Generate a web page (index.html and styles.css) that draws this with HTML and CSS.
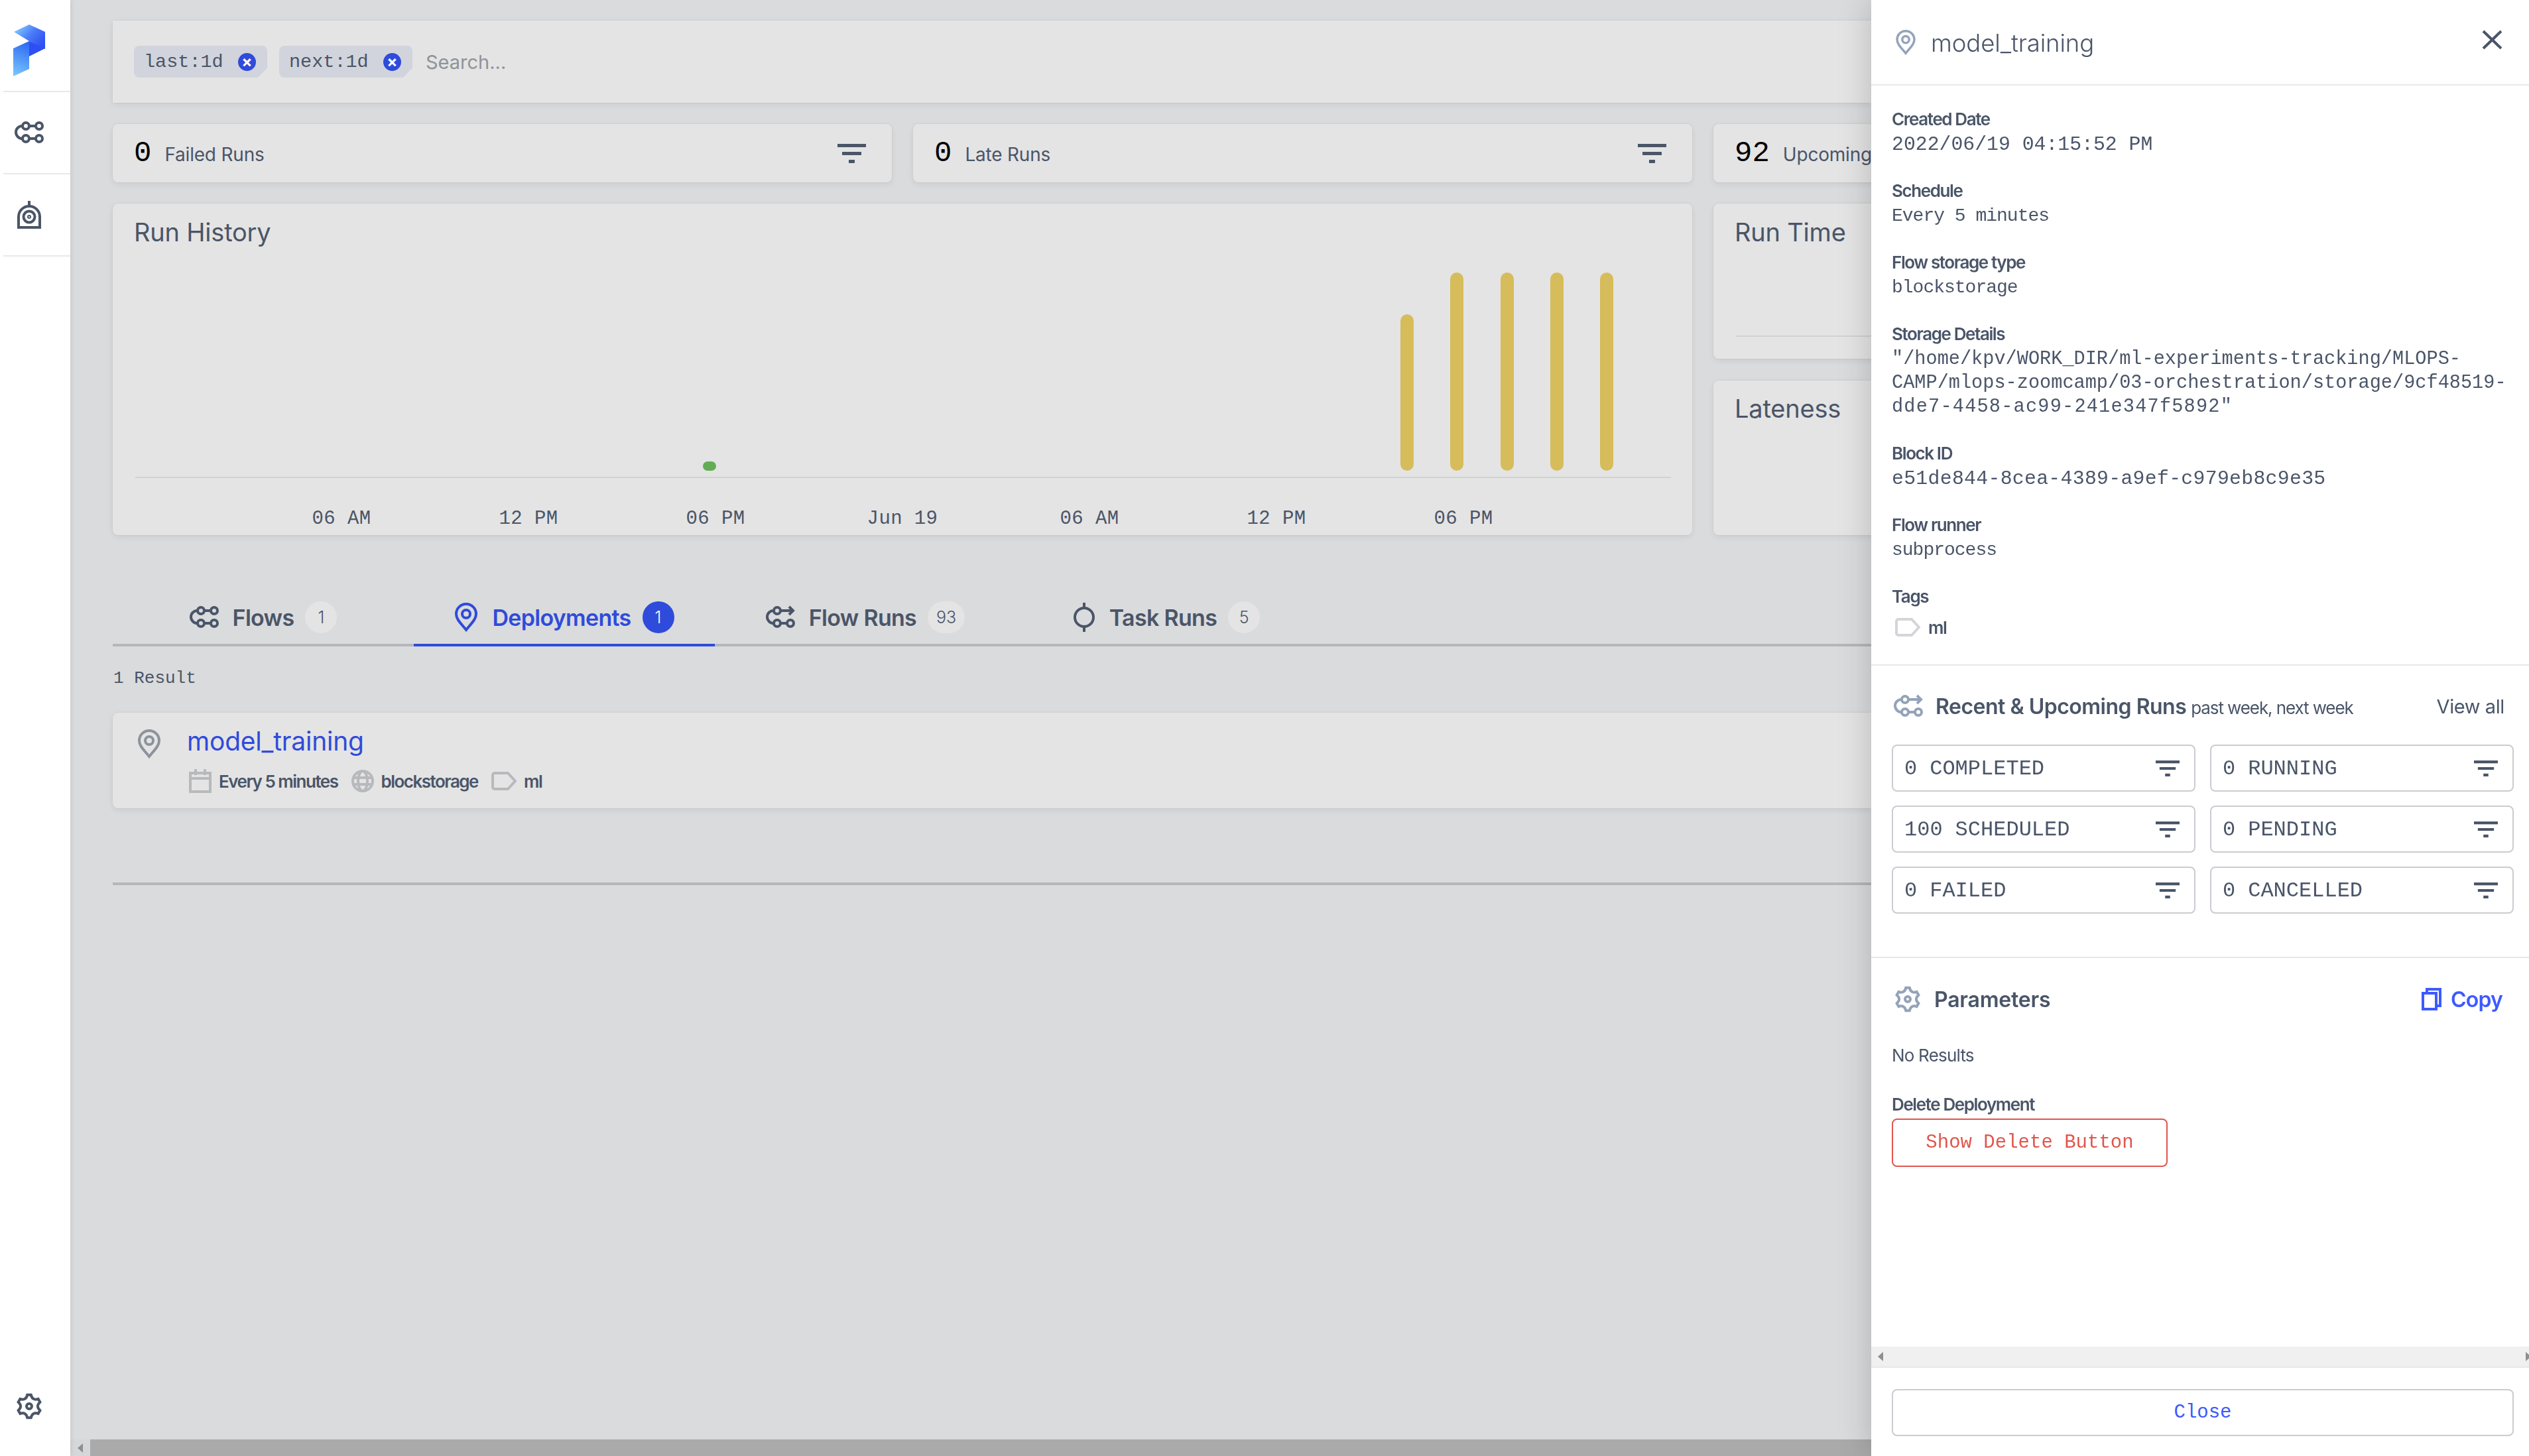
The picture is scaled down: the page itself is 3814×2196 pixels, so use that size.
FILE: index.html
```html
<!DOCTYPE html>
<html lang="en">
<head>
  <meta charset="UTF-8">
  <title>Prefect Orion</title>
  <link rel="stylesheet" href="styles.css">
</head>
<body>
  <svg class="icon-defs" width="0" height="0">
    <defs>
      <symbol id="i-flow" viewBox="0 0 44 36">
        <circle cx="17" cy="8" r="5"/><circle cx="37" cy="8" r="5"/><circle cx="17" cy="27" r="5"/><circle cx="37" cy="27" r="5"/>
        <path d="M22 8H32M22 27H32M12 8H11.500A9.500 9.500 0 0 0 11.500 27H12"/>
      </symbol>
      <symbol id="i-flow-run" viewBox="0 0 44 36">
        <circle cx="17" cy="8" r="5"/><circle cx="17" cy="27" r="5"/><circle cx="37" cy="27" r="5"/>
        <path d="M22 8H40M35 2L41 8L35 14M22 27H32M12 8H11.500A9.500 9.500 0 0 0 11.500 27H12"/>
      </symbol>
      <symbol id="i-task" viewBox="0 0 34 44">
        <circle cx="17" cy="22" r="14"/><path d="M17 0V8M17 36V44"/>
      </symbol>
      <symbol id="i-pin" viewBox="0 0 36 44">
        <path d="M18 41C10 31 3 25 3 17A15 15 0 0 1 33 17C33 25 26 31 18 41Z"/><circle cx="18" cy="17" r="6"/>
      </symbol>
      <symbol id="i-agent" viewBox="0 0 36 42">
        <path d="M18 0V8M2 40V24A16 16 0 0 1 34 24V40Z"/><circle cx="18" cy="24" r="8.500"/><circle cx="18" cy="24" r="1"/>
      </symbol>
      <symbol id="i-gear" viewBox="0 0 40 40">
        <path d="M17.260 2.720L22.740 2.720Q24.750 11.770 33.600 8.990L36.340 13.730Q29.500 20 36.340 26.270L33.600 31.010Q24.750 28.230 22.740 37.280L17.260 37.280Q15.250 28.230 6.400 31.010L3.660 26.270Q10.500 20 3.660 13.730L6.400 8.990Q15.250 11.770 17.260 2.720Z"/>
        <circle cx="20" cy="20" r="4"/>
      </symbol>
      <symbol id="i-tag" viewBox="0 0 38 28">
        <path d="M5 2H25L36 14L25 26H5A3 3 0 0 1 2 23V5A3 3 0 0 1 5 2Z"/>
      </symbol>
      <symbol id="i-calendar" viewBox="0 0 34 36">
        <path d="M2 6H32V34H2ZM2 14H32M10 0V9M24 0V9"/>
      </symbol>
      <symbol id="i-globe" viewBox="0 0 34 34">
        <circle cx="17" cy="17" r="15"/><ellipse cx="17" cy="17" rx="7" ry="15"/><path d="M2 12H32M2 22H32"/>
      </symbol>
      <symbol id="i-filter" viewBox="0 0 43 29" preserveAspectRatio="none">
        <path class="solid" d="M0 0H43V5H0ZM7 12H36V17H7ZM17 24H26V29H17Z"/>
      </symbol>
      <symbol id="i-copy" viewBox="0 0 30 34">
        <path d="M8 6V2H28V27H23M2 8H22V32H2Z"/>
      </symbol>
      <symbol id="i-close" viewBox="0 0 31 30">
        <path d="M2 2L29 28M29 2L2 28"/>
      </symbol>
      <linearGradient id="logo-top" x1="0" y1="0" x2="1" y2="0.700">
        <stop offset="0" stop-color="#8fdcff"/><stop offset="0.550" stop-color="#4a7cf8"/><stop offset="1" stop-color="#2f50f2"/>
      </linearGradient>
      <linearGradient id="logo-low" x1="0.500" y1="0" x2="0.300" y2="1">
        <stop offset="0" stop-color="#2f6cf2"/><stop offset="1" stop-color="#79c4fd"/>
      </linearGradient>
    </defs>
  </svg>

  <div class="app">
    <nav class="sidebar">
      <div class="side-item side-logo">
        <svg class="logo" viewBox="0 0 48 78">
          <polygon fill="url(#logo-top)" points="1,11 24,0 48,11 48,37 24,25"/>
          <polygon fill="#2e4ff5" points="24,25 48,36 24,48"/>
          <polygon fill="url(#logo-low)" points="0,36 24,25 24,67 0,78"/>
        </svg>
      </div>
      <div class="side-item"><svg class="ico ico-flow side-ico"><use href="#i-flow"/></svg></div>
      <div class="side-item"><svg class="ico ico-agent side-ico"><use href="#i-agent"/></svg></div>
      <div class="side-spacer"></div>
      <div class="side-bottom"><svg class="ico ico-gear side-ico"><use href="#i-gear"/></svg></div>
    </nav>

    <div class="main">
      <div class="content">
        <div class="search-card">
          <span class="chip">last:1d <span class="chip-x">×</span></span>
          <span class="chip">next:1d <span class="chip-x">×</span></span>
          <input class="search-input" type="text" placeholder="Search...">
        </div>

        <div class="stats-row">
          <div class="stat-card">
            <span class="stat-num">0</span><span class="stat-label">Failed Runs</span>
            <svg class="filter filter-lg"><use href="#i-filter"/></svg>
          </div>
          <div class="stat-card">
            <span class="stat-num">0</span><span class="stat-label">Late Runs</span>
            <svg class="filter filter-lg"><use href="#i-filter"/></svg>
          </div>
          <div class="stat-card">
            <span class="stat-num">92</span><span class="stat-label">Upcoming Runs</span>
            <svg class="filter filter-lg"><use href="#i-filter"/></svg>
          </div>
        </div>

        <div class="charts-row">
          <div class="chart-card history-card">
            <h2 class="chart-title">Run History</h2>
            <svg class="history-chart" viewBox="0 0 2381 330">
              <rect class="chart-axis" x="34" y="319" width="2316" height="2"/>
              <rect class="chart-dot" x="890" y="296" width="20" height="14" rx="7"/>
              <rect class="chart-bar" x="1942" y="74" width="20" height="236" rx="10"/>
              <rect class="chart-bar" x="2017" y="11" width="20" height="299" rx="10"/>
              <rect class="chart-bar" x="2093" y="11" width="20" height="299" rx="10"/>
              <rect class="chart-bar" x="2168" y="11" width="20" height="299" rx="10"/>
              <rect class="chart-bar" x="2243" y="11" width="20" height="299" rx="10"/>
            </svg>
            <div class="chart-ticks">
              <span>06 AM</span><span>12 PM</span><span>06 PM</span><span>Jun 19</span><span>06 AM</span><span>12 PM</span><span>06 PM</span>
            </div>
          </div>
          <div class="chart-side">
            <div class="chart-card side-card runtime-card">
              <h2 class="chart-title">Run Time</h2>
              <div class="runtime-line"></div>
            </div>
            <div class="chart-card side-card">
              <h2 class="chart-title">Lateness</h2>
            </div>
          </div>
        </div>

        <div class="tabs">
          <div class="tab">
            <svg class="ico ico-flow tab-ico"><use href="#i-flow"/></svg>
            <span class="tab-name">Flows</span><span class="tab-badge">1</span>
          </div>
          <div class="tab tab-active">
            <svg class="ico ico-pin tab-ico"><use href="#i-pin"/></svg>
            <span class="tab-name">Deployments</span><span class="tab-badge">1</span>
          </div>
          <div class="tab">
            <svg class="ico ico-flow tab-ico"><use href="#i-flow-run"/></svg>
            <span class="tab-name">Flow Runs</span><span class="tab-badge">93</span>
          </div>
          <div class="tab">
            <svg class="ico ico-task tab-ico"><use href="#i-task"/></svg>
            <span class="tab-name">Task Runs</span><span class="tab-badge">5</span>
          </div>
        </div>

        <div class="result-count">1 Result</div>

        <div class="deploy-card">
          <svg class="ico ico-pin deploy-pin"><use href="#i-pin"/></svg>
          <div class="deploy-info">
            <a class="deploy-name">model_training</a>
            <div class="deploy-meta">
              <svg class="ico ico-cal meta-ico"><use href="#i-calendar"/></svg><span class="meta-text">Every 5 minutes</span>
              <svg class="ico ico-globe meta-ico"><use href="#i-globe"/></svg><span class="meta-text">blockstorage</span>
              <svg class="ico ico-tag meta-ico"><use href="#i-tag"/></svg><span class="meta-text">ml</span>
            </div>
          </div>
        </div>

        <div class="list-end"></div>
      </div>

      <div class="main-scroll">
        <div class="scroll-btn"><span class="arrow-left"></span></div>
        <div class="scroll-thumb"></div>
      </div>
    </div>
  </div>

  <aside class="panel">
    <header class="panel-head">
      <svg class="ico ico-pin head-pin"><use href="#i-pin"/></svg>
      <span class="panel-title">model_training</span>
      <svg class="ico ico-close"><use href="#i-close"/></svg>
    </header>

    <div class="panel-body">
      <section class="details">
        <div class="field"><div class="field-label">Created Date</div><div class="field-value">2022/06/19 04:15:52 PM</div></div>
        <div class="field"><div class="field-label">Schedule</div><div class="field-value value-text">Every 5 minutes</div></div>
        <div class="field"><div class="field-label">Flow storage type</div><div class="field-value value-text">blockstorage</div></div>
        <div class="field">
          <div class="field-label">Storage Details</div>
          <div class="field-value value-path">"/home/kpv/WORK_DIR/ml-experiments-tracking/MLOPS-<br>CAMP/mlops-zoomcamp/03-orchestration/storage/9cf48519-<br><span class="value-wide">dde7-4458-ac99-241e347f5892"</span></div>
        </div>
        <div class="field"><div class="field-label">Block ID</div><div class="field-value value-hex">e51de844-8cea-4389-a9ef-c979eb8c9e35</div></div>
        <div class="field"><div class="field-label">Flow runner</div><div class="field-value value-text">subprocess</div></div>
        <div class="field">
          <div class="field-label">Tags</div>
          <div class="field-tag"><svg class="ico ico-tag tag-ico"><use href="#i-tag"/></svg><span class="meta-text">ml</span></div>
        </div>
      </section>

      <section class="runs">
        <div class="section-head">
          <svg class="ico ico-section"><use href="#i-flow-run"/></svg>
          <span class="section-title">Recent &amp; Upcoming Runs</span>
          <span class="section-sub">past week, next week</span>
          <span class="view-all">View all</span>
        </div>
        <div class="state-grid">
          <div class="state-box"><span class="state-num">0</span><span>COMPLETED</span><svg class="filter filter-sm"><use href="#i-filter"/></svg></div>
          <div class="state-box"><span class="state-num">0</span><span>RUNNING</span><svg class="filter filter-sm"><use href="#i-filter"/></svg></div>
          <div class="state-box"><span class="state-num">100</span><span>SCHEDULED</span><svg class="filter filter-sm"><use href="#i-filter"/></svg></div>
          <div class="state-box"><span class="state-num">0</span><span>PENDING</span><svg class="filter filter-sm"><use href="#i-filter"/></svg></div>
          <div class="state-box"><span class="state-num">0</span><span>FAILED</span><svg class="filter filter-sm"><use href="#i-filter"/></svg></div>
          <div class="state-box"><span class="state-num">0</span><span>CANCELLED</span><svg class="filter filter-sm"><use href="#i-filter"/></svg></div>
        </div>
      </section>

      <section class="params">
        <div class="section-head">
          <svg class="ico ico-section ico-param"><use href="#i-gear"/></svg>
          <span class="section-title">Parameters</span>
          <span class="copy"><svg class="ico ico-copy"><use href="#i-copy"/></svg>Copy</span>
        </div>
        <div class="no-results">No Results</div>
        <div class="field-label delete-label">Delete Deployment</div>
        <button class="btn-delete">Show Delete Button</button>
      </section>
    </div>

    <div class="panel-scroll"><span class="arrow-left"></span><span class="arrow-right"></span></div>

    <footer class="panel-foot">
      <button class="btn-close">Close</button>
    </footer>
  </aside>
</body>
</html>
```

FILE: styles.css
```css
* {
  box-sizing: border-box;
}

html, body {
  margin: 0;
  height: 100%;
  overflow: hidden;
}

body {
  font-family: Inter, "Liberation Sans", sans-serif;
  color: #4a5568;
  background: #dadbdd;
}

.icon-defs {
  position: absolute;
}

.solid {
  fill: currentColor;
  stroke: none;
}

.ico {
  display: block;
  flex: none;
  fill: none;
  stroke: currentColor;
  stroke-width: 4;
}

.app {
  display: flex;
  height: 100vh;
}

/* left nav */
.sidebar {
  width: 106px;
  flex: none;
  display: flex;
  flex-direction: column;
  background: #fff;
  box-shadow: 0 0 8px rgba(0, 0, 0, 0.12);
  z-index: 1;
}

.side-item {
  height: 124px;
  margin-left: 5px;
  padding-right: 23px;
  display: flex;
  align-items: center;
  justify-content: center;
  border-bottom: 2px solid #e8e8e8;
}

.side-logo {
  height: 139px;
}

.logo {
  width: 48px;
  height: 78px;
  margin-top: 14px;
}

.side-ico {
  color: #4a5568;
}

.ico-flow {
  width: 44px;
  height: 36px;
}

.ico-agent {
  width: 36px;
  height: 42px;
}

.ico-gear {
  width: 40px;
  height: 40px;
}

.side-spacer {
  flex: 1;
}

.side-bottom {
  display: flex;
  justify-content: center;
  padding: 0 18px 55px 0;
}

/* page behind the panel */
.main {
  flex: 1;
  min-width: 0;
  display: flex;
  flex-direction: column;
}

.content {
  flex: 1;
  min-height: 0;
  overflow: hidden;
  margin-right: 992px;
  padding: 31px 0 0 64px;
}

.search-card,
.stat-card,
.chart-card,
.deploy-card {
  background: #e4e4e4;
  box-shadow: 0 3px 10px rgba(0, 0, 0, 0.07), 0 0 3px rgba(0, 0, 0, 0.06);
}

.search-card {
  height: 124px;
  padding-left: 32px;
  display: flex;
  align-items: center;
  gap: 18px;
}

.chip {
  height: 48px;
  width: 201px;
  padding: 0 17px 0 15px;
  display: flex;
  align-items: center;
  justify-content: space-between;
  background: #d1d4dc;
  border-radius: 8px;
  clip-path: polygon(0 0, 100% 0, 100% 70%, 93% 100%, 0 100%);
  font-family: "Liberation Mono", monospace;
  font-size: 28.500px;
}

.chip-x {
  width: 27px;
  height: 27px;
  border-radius: 50%;
  background: #2f4bdb;
  color: #fff;
  display: flex;
  align-items: center;
  justify-content: center;
  font-family: Inter, sans-serif;
  font-size: 24px;
  font-weight: 700;
  line-height: 1;
}

.search-input {
  margin-left: 2px;
  width: 400px;
  border: 0;
  padding: 0;
  outline: 0;
  background: transparent;
  font-family: Inter, sans-serif;
  font-size: 29px;
  letter-spacing: 0;
}

.search-input::placeholder {
  color: #8f939a;
  opacity: 1;
}

.stats-row {
  display: grid;
  grid-template-columns: 1175px 1175px 1175px;
  gap: 32px;
  margin-top: 32px;
}

.stat-card {
  height: 88px;
  padding: 0 39px 0 32px;
  display: flex;
  align-items: center;
  border-radius: 8px;
}

.stat-num {
  font-family: "Liberation Mono", monospace;
  font-size: 44px;
  line-height: 1;
  color: #000;
  margin-right: 20px;
}

.stat-label {
  flex: 1;
  font-size: 28px;
  letter-spacing: -0.2px;
  padding-top: 4px;
}

.filter {
  flex: none;
  color: #4a5568;
}

.filter-lg {
  width: 43px;
  height: 29px;
}

.filter-sm {
  width: 36px;
  height: 24px;
}

.charts-row {
  display: grid;
  grid-template-columns: 2382px 1175px;
  gap: 32px;
  margin-top: 32px;
  height: 500px;
}

.chart-card {
  border-radius: 8px;
  padding-top: 18px;
}

.chart-title {
  margin: 0 0 0 32px;
  font-size: 38px;
  line-height: 50px;
  font-weight: 400;
  letter-spacing: -0.2px;
}

.history-chart {
  display: block;
  width: 2381px;
  height: 330px;
  margin-top: 25px;
}

.chart-axis {
  fill: #d0d1d3;
}

.chart-dot {
  fill: #62ad54;
}

.chart-bar {
  fill: #d6bc5a;
}

.chart-ticks {
  display: grid;
  grid-template-columns: repeat(7, 282px);
  margin: 33px 0 0 204px;
  font-family: "Liberation Mono", monospace;
  font-size: 29px;
  letter-spacing: 0.4px;
  line-height: 40px;
  text-align: center;
}

.chart-side {
  display: flex;
  flex-direction: column;
  gap: 33px;
}

.side-card {
  height: 233.500px;
  padding-top: 18px;
}

.runtime-line {
  height: 2px;
  margin: 131px 0 0 34px;
  background: #d0d1d3;
}

.side-card + .side-card {
  padding-top: 17px;
}

/* tabs */
.tabs {
  display: flex;
  margin-top: 84px;
  border-bottom: 4px solid #b6b7bb;
}

.tab {
  width: 454px;
  height: 84px;
  margin-bottom: -4px;
  display: flex;
  align-items: center;
  justify-content: center;
  border-bottom: 4px solid transparent;
}

.tab-ico {
  margin-right: 21px;
}

.tab-name {
  font-size: 34px;
  font-weight: 600;
  letter-spacing: -0.7px;
}

.tab-badge {
  margin-left: 17px;
  min-width: 48px;
  height: 48px;
  padding: 0 13px;
  border-radius: 24px;
  display: flex;
  align-items: center;
  justify-content: center;
  background: #e4e4e4;
  font-size: 25px;
  font-weight: 300;
}

.tab-active {
  color: #2f4bdb;
  border-bottom-color: #2f4bdb;
}

.tab-active .tab-badge {
  background: #2f4bdb;
  color: #fff;
}

.ico-pin {
  width: 36px;
  height: 44px;
}

.ico-task {
  width: 34px;
  height: 44px;
}

.result-count {
  margin-top: 30px;
  font-family: "Liberation Mono", monospace;
  font-size: 26px;
  line-height: 36px;
  padding-left: 1px;
}

.deploy-card {
  margin-top: 34px;
  height: 144px;
  padding: 18px 0 0 37px;
  display: flex;
  border-radius: 8px 0 0 8px;
}

.deploy-pin {
  margin: 7px 39px 0 0;
  color: #8c939c;
}

.deploy-info {
  display: flex;
  flex-direction: column;
}

.deploy-name {
  font-size: 39px;
  line-height: 50px;
  font-weight: 400;
  letter-spacing: -0.2px;
  color: #2f4bdb;
}

.deploy-meta {
  display: flex;
  align-items: center;
  height: 36px;
  margin-top: 17px;
}

.meta-ico {
  color: #b8b9bc;
  margin-right: 11px;
}

.meta-text {
  font-size: 26px;
  font-weight: 600;
  letter-spacing: -1.5px;
  margin-right: 20px;
}

.ico-cal {
  width: 34px;
  height: 36px;
  margin-left: 3px;
}

.ico-globe {
  width: 34px;
  height: 34px;
}

.ico-tag {
  width: 38px;
  height: 28px;
}

.list-end {
  margin-top: 112px;
  height: 4px;
  background: #b6b7bb;
}

.main-scroll {
  height: 25px;
  flex: none;
  display: flex;
  background: #d6d7d9;
}

.scroll-btn {
  width: 30px;
  display: flex;
  align-items: center;
  justify-content: center;
}

.scroll-thumb {
  flex: 1;
  background: #aaa;
}

.arrow-left,
.arrow-right {
  width: 0;
  height: 0;
  border-top: 7px solid transparent;
  border-bottom: 7px solid transparent;
}

.arrow-left {
  border-right: 8px solid #8f8f8f;
}

.arrow-right {
  border-left: 8px solid #8f8f8f;
}

/* slide-over panel */
.panel {
  position: fixed;
  top: 0;
  right: 0;
  bottom: 0;
  width: 992px;
  display: flex;
  flex-direction: column;
  background: #fff;
  box-shadow: 0 0 48px rgba(0, 0, 0, 0.2);
  z-index: 2;
}

.panel-head {
  height: 129px;
  flex: none;
  padding: 0 40px 0 36px;
  display: flex;
  align-items: center;
  border-bottom: 2px solid #e8e8e8;
}

.head-pin {
  width: 32px;
  height: 38px;
  color: #94a3b8;
  margin-right: 22px;
}

.panel-title {
  flex: 1;
  font-size: 36.500px;
  font-weight: 300;
  letter-spacing: -0.1px;
  padding-top: 2px;
}

.ico-close {
  width: 31px;
  height: 30px;
  margin: 0 0 8px;
}

.panel-body {
  flex: 1;
  min-height: 0;
  overflow: hidden;
}

.details {
  padding: 30px 31px 38px;
  display: flex;
  flex-direction: column;
  gap: 31px;
  border-bottom: 2px solid #e8e8e8;
}

.field-label {
  font-size: 26px;
  line-height: 41px;
  font-weight: 600;
  letter-spacing: -1.4px;
}

.field-value {
  font-family: "Liberation Mono", monospace;
  font-size: 29.800px;
  line-height: 36px;
  white-space: nowrap;
}

.value-text {
  font-size: 28px;
  letter-spacing: -1px;
}

.value-path {
  font-size: 28.600px;
}

.value-wide {
  letter-spacing: 1.200px;
}

.value-hex {
  letter-spacing: 0.300px;
}

.field-tag {
  display: flex;
  align-items: center;
  height: 36px;
  margin-top: 8px;
  padding-left: 5px;
}

.tag-ico {
  color: #d4d5d8;
  margin-right: 12px;
}

.runs {
  padding: 36px 23px 65px 31px;
  border-bottom: 2px solid #e8e8e8;
}

.section-head {
  display: flex;
  align-items: center;
  height: 50px;
  padding-right: 14px;
}

.ico-section {
  width: 44px;
  height: 36px;
  margin: 0 19px 0 3px;
  color: #94a3b8;
}

.ico-param {
  width: 42px;
  height: 40px;
}

.section-title {
  font-size: 32px;
  font-weight: 600;
  letter-spacing: -0.5px;
}

.section-sub {
  flex: 1;
  margin: 4px 0 0 7px;
  font-size: 26px;
  font-weight: 400;
  letter-spacing: -1.1px;
}

.view-all {
  font-size: 29px;
  font-weight: 400;
  letter-spacing: -0.4px;
}

.state-grid {
  display: grid;
  grid-template-columns: 458px 458px;
  grid-auto-rows: 71px;
  gap: 21px 22px;
  margin-top: 33px;
}

.state-box {
  display: flex;
  align-items: center;
  padding: 2px 22px 0 17px;
  border: 2px solid #cbccd1;
  border-radius: 8px;
  font-family: "Liberation Mono", monospace;
  font-size: 32px;
}

.state-box .filter {
  margin: -2px 0 0 auto;
}

.state-num {
  margin-right: 19px;
}

.params {
  padding: 37px 31px 0;
}

.params .section-head {
  justify-content: space-between;
  padding-right: 9px;
}

.params .section-title {
  flex: 1;
  letter-spacing: -0.2px;
}

.copy {
  display: flex;
  align-items: center;
  gap: 14px;
  color: #3d5aff;
  font-size: 32px;
  font-weight: 600;
  letter-spacing: -0.8px;
}

.ico-copy {
  width: 30px;
  height: 34px;
}

.no-results {
  margin-top: 42px;
  font-size: 26px;
  line-height: 36px;
  letter-spacing: -0.8px;
}

.delete-label {
  margin-top: 35px;
}

.btn-delete {
  display: block;
  margin-top: 1px;
  width: 416px;
  height: 73px;
  border: 2px solid #e0564c;
  border-radius: 8px;
  background: #fff;
  color: #e0564c;
  font-family: "Liberation Mono", monospace;
  font-size: 29px;
}

.panel-scroll {
  height: 30px;
  flex: none;
  padding: 0 0 0 10px;
  display: flex;
  align-items: center;
  justify-content: space-between;
  background: #f0f0f0;
}

.panel-scroll .arrow-right {
  margin-right: -3px;
}

.panel-foot {
  flex: none;
  padding: 32px 23px 30px 31px;
  border-top: 2px solid #e8e8e8;
}

.btn-close {
  display: block;
  width: 100%;
  height: 71px;
  border: 2px solid #cbccd1;
  border-radius: 8px;
  background: #fff;
  color: #3d5aff;
  font-family: "Liberation Mono", monospace;
  font-size: 29px;
}
```
